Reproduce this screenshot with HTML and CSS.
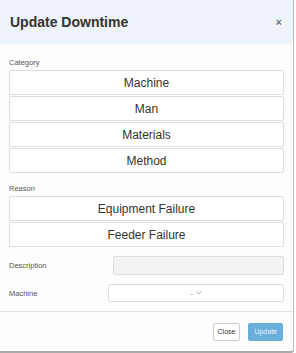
FILE: index.html
```html
<!DOCTYPE html>
<html>
  <head>
    <meta charset="UTF-8" />
    <title>Update Downtime</title>
    <link rel="stylesheet" href="styles.css">
  </head>
  <body>
    <div class="modal">
      <div class="modal-header">
        <h4>Update Downtime</h4>
        <span class="close-x">&times;</span>
      </div>

      <div class="modal-body">
        <div class="group-label">Category</div>
        <div class="choice-list">
          <button class="choice">Machine</button>
          <button class="choice">Man</button>
          <button class="choice">Materials</button>
          <button class="choice">Method</button>
        </div>

        <div class="group-label reason">Reason</div>
        <div class="choice-list">
          <button class="choice">Equipment Failure</button>
          <button class="choice">Feeder Failure</button>
        </div>

        <div class="form-row first-row">
          <label>Description</label>
          <input type="text" class="desc-input" readonly />
        </div>
        <div class="form-row">
          <label>Machine</label>
          <div class="select-box">
            <span>-</span>
            <svg class="caret" width="6" height="4" viewBox="0 0 6 4">
              <path d="M0.5 0.5 L3 3 L5.5 0.5" fill="none" stroke="#aaa" stroke-width="1" />
            </svg>
          </div>
        </div>
      </div>

      <div class="modal-footer">
        <button class="btn btn-close">Close</button>
        <button class="btn btn-update">Update</button>
      </div>
    </div>
  </body>
</html>
```

FILE: styles.css
```css
* {
  box-sizing: border-box;
}

body {
  margin: 0;
  font-family: "Liberation Sans", Arial, Helvetica, sans-serif;
  color: #333;
  background-color: #fff;
}

.modal {
  width: 294px;
  height: 353px;
  background-color: #fdfdfd;
  border-right: 1px solid #bbb;
  border-bottom: 2px solid #aaa;
  border-bottom-right-radius: 3px;
  display: flex;
  flex-direction: column;
}

.modal-header {
  height: 44px;
  background-color: #eef3fa;
  border-bottom-right-radius: 4px;
  display: flex;
  align-items: center;
  justify-content: space-between;
  padding: 0 10px;
}

.modal-header h4 {
  margin: 0;
  font-size: 14px;
  font-weight: bold;
  color: #333;
}

.close-x {
  font-size: 11px;
  font-weight: bold;
  color: #777;
  margin-right: 1px;
}

.modal-body {
  padding: 14px 9px 0 9px;
}

.group-label {
  font-size: 7.5px;
  color: #555;
  height: 10px;
  line-height: 10px;
  margin-bottom: 2px;
}

.group-label.reason {
  margin-top: 11px;
  margin-bottom: 2px;
}

.choice-list {
  display: flex;
  flex-direction: column;
  gap: 1px;
}

.choice {
  height: 25px;
  width: 100%;
  background-color: #fff;
  border: 1px solid #ddd;
  border-radius: 2px;
  font-family: inherit;
  font-size: 12px;
  color: #333;
  padding: 0;
}

.form-row {
  display: flex;
  align-items: center;
  justify-content: space-between;
  font-size: 7.5px;
  color: #555;
  margin-top: 9px;
}

.form-row.first-row {
  margin-top: 9px;
}

.desc-input {
  width: 171px;
  height: 19px;
  background-color: #f3f3f3;
  border: 1px solid #ddd;
  border-radius: 2px;
  padding: 0;
}

.select-box {
  width: 176px;
  height: 18px;
  background-color: #fff;
  border: 1px solid #ddd;
  border-radius: 2px;
  display: flex;
  align-items: center;
  justify-content: center;
  gap: 3px;
  font-size: 8px;
  color: #999;
}

.caret {
  display: block;
}

.modal-footer {
  margin-top: auto;
  border-top: 1px solid #e3e3e3;
  height: 40px;
  display: flex;
  justify-content: flex-end;
  align-items: center;
  gap: 8px;
  padding: 0 10px 0 0;
}

.btn {
  height: 18px;
  font-family: inherit;
  font-size: 7px;
  padding: 0 4px;
  border-radius: 2px;
}

.btn-close {
  background-color: #fff;
  border: 1px solid #ccc;
  color: #333;
}

.btn-update {
  background-color: #6aaedc;
  border: 1px solid #6aaedc;
  color: #e8f3fb;
  padding: 0 5px;
}
```
